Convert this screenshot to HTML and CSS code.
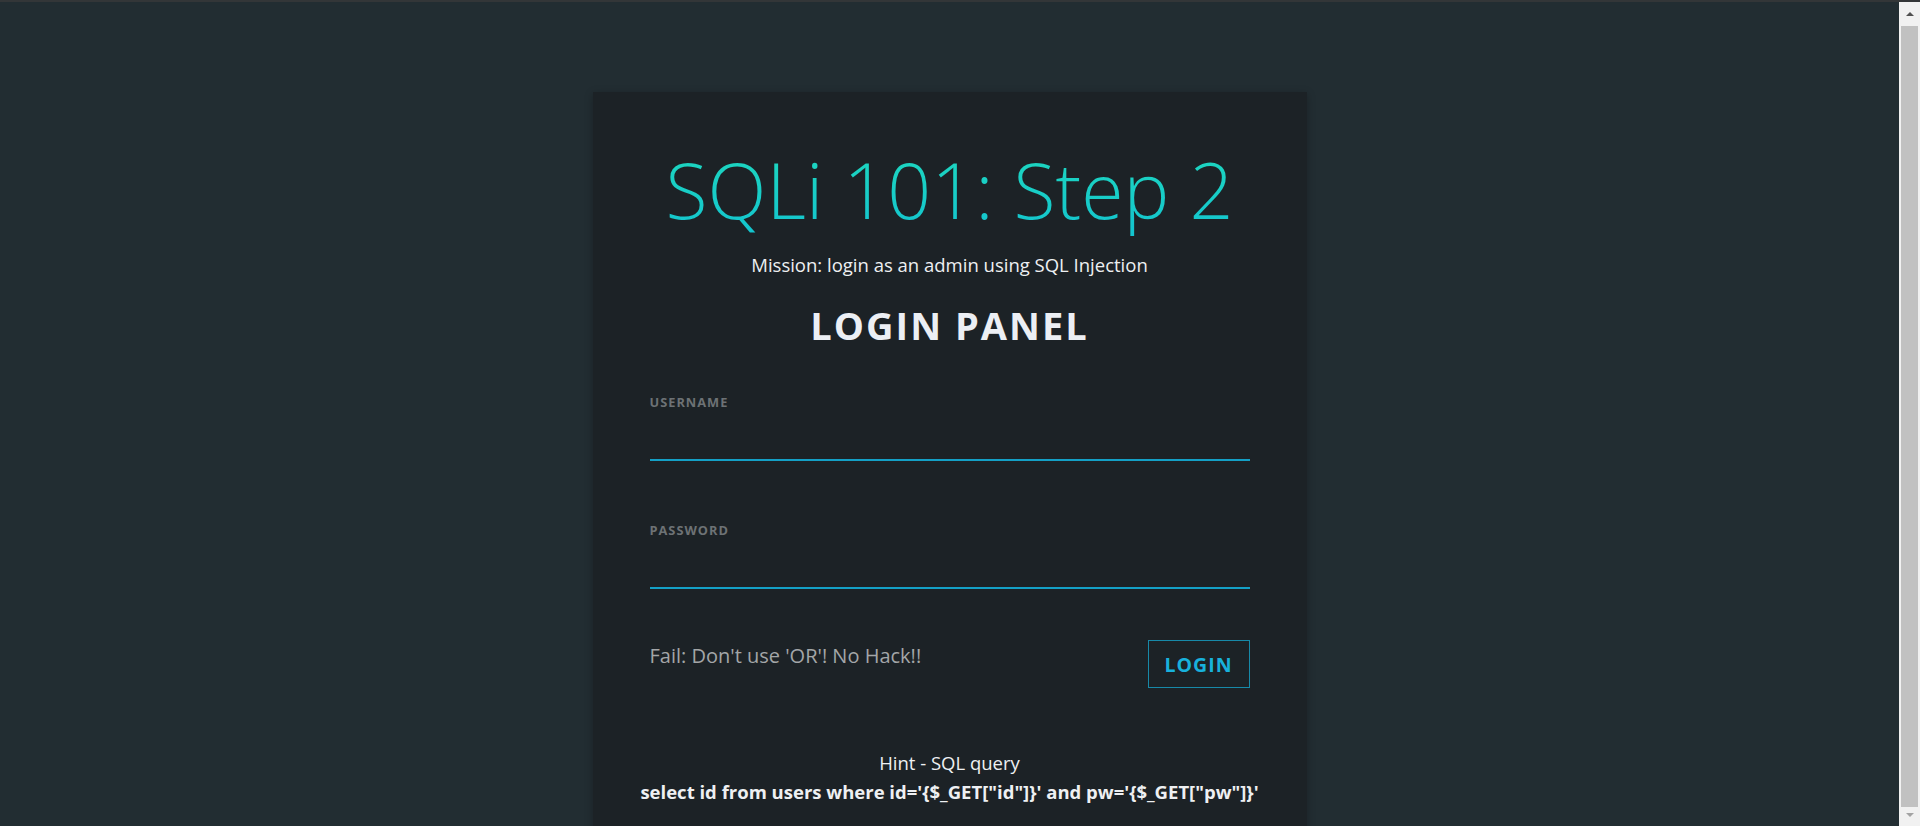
FILE: index.html
```html
<!DOCTYPE html>
<html lang="en">
<head>
    <meta charset="UTF-8">
    <meta name="viewport" content="width=device-width, initial-scale=1.0">
    <title>SQLi 101: Step 2</title>
    <link rel="stylesheet" href="styles.css">
</head>
<body>
    <div class="window-edge" aria-hidden="true"></div>
    <div class="scrollbar" aria-hidden="true">
        <span class="arrow arrow-up"></span>
        <span class="thumb"></span>
        <span class="arrow arrow-down"></span>
    </div>
    <div class="container">
        <h1 class="title">SQLi 101: Step 2</h1>
        <p class="mission">Mission: login as an admin using SQL Injection</p>
        <h2 class="panel-title">LOGIN PANEL</h2>
        <form class="login-form" method="get">
            <div class="field">
                <label for="id">Username</label>
                <input type="text" id="id" name="id">
            </div>
            <div class="field">
                <label for="pw">Password</label>
                <input type="password" id="pw" name="pw">
            </div>
            <div class="form-footer">
                <p class="message">Fail: Don't use 'OR'! No Hack!!</p>
                <button type="submit" class="button">LOGIN</button>
            </div>
        </form>
        <div class="hint">
            <p>Hint - SQL query</p>
            <p class="query">select id from users where id='{$_GET["id"]}' and pw='{$_GET["pw"]}'</p>
        </div>
    </div>
</body>
</html>
```

FILE: styles.css
```css
body {
    font-family: 'Open Sans', 'Noto Sans', sans-serif;
    margin: 0 21px 0 0;
    background-color: #222d32;
    color: #eef0f2;
}

/* browser chrome seen in the screenshot */
.window-edge {
    position: fixed;
    top: 0;
    left: 0;
    right: 0;
    height: 2px;
    background-color: #333638;
    z-index: 2;
}

.scrollbar {
    position: fixed;
    top: 2px;
    right: 0;
    bottom: 0;
    width: 21px;
    display: flex;
    flex-direction: column;
    align-items: center;
    background-color: #f1f1f1;
    z-index: 2;
}

.scrollbar .thumb {
    flex: 1;
    width: 17px;
    margin: 0 2px;
    background-color: #c1c1c1;
}

.scrollbar .arrow {
    width: 0;
    height: 0;
    border-left: 4px solid transparent;
    border-right: 4px solid transparent;
}

.arrow-up {
    margin: 10px 0 10px;
    border-bottom: 4px solid #505050;
}

.arrow-down {
    margin: 6px 0 9px;
    border-top: 4px solid #a3a3a3;
}

.container {
    width: 714px;
    box-sizing: border-box;
    margin: 92px auto 0;
    padding: 52px 57px 40px;
    background-color: #1c2226;
    box-shadow: 0 2px 8px rgba(0, 0, 0, 0.25);
    text-align: center;
}

.title {
    margin: 0;
    font-size: 77px;
    font-weight: 350;
    line-height: 1.2;
    background: linear-gradient(#1ed8bd, #13c4cf);
    -webkit-background-clip: text;
    background-clip: text;
    color: transparent;
}

.mission {
    margin: 16px 0 0;
    font-size: 18.5px;
}

.panel-title {
    margin: 22px 0 0;
    font-size: 38px;
    font-weight: 700;
    letter-spacing: 2px;
    color: #eceff4;
}

.login-form {
    margin-top: 42px;
    text-align: left;
}

.field + .field {
    margin-top: 60px;
}

.field label {
    display: block;
    font-size: 12.8px;
    font-weight: 700;
    text-transform: uppercase;
    letter-spacing: 1px;
    color: #6d7275;
}

.field input {
    display: block;
    width: 100%;
    height: 50px;
    box-sizing: border-box;
    border: none;
    border-bottom: 2px solid #14a0c6;
    background: transparent;
    color: #eef0f2;
    font-size: 16px;
    outline: none;
}

.form-footer {
    display: flex;
    justify-content: space-between;
    align-items: flex-start;
    margin-top: 51px;
}

.message {
    margin: 2px 0 0;
    font-size: 20px;
    color: #a3a6a8;
}

.button {
    width: 102px;
    height: 48px;
    padding: 0;
    font-family: inherit;
    font-size: 19.5px;
    font-weight: 700;
    letter-spacing: 1px;
    color: #18b1dc;
    background: transparent;
    border: 1px solid #1789a8;
    cursor: pointer;
}

.hint {
    margin: 60px -40px 0;
    font-size: 18.5px;
}

.hint p {
    margin: 0;
    line-height: 29px;
}

.hint .query {
    font-weight: 700;
    white-space: nowrap;
}
```
